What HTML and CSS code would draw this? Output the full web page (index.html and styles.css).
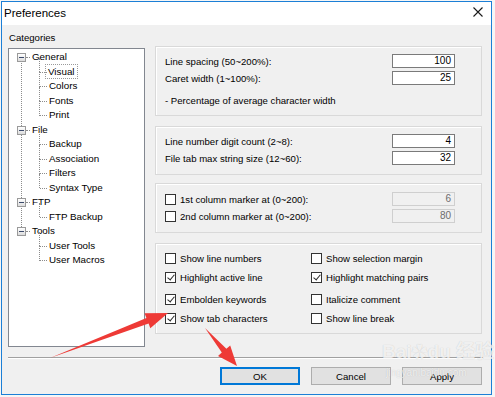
FILE: index.html
```html
<!DOCTYPE html>
<html lang="en">
<head>
    <meta charset="UTF-8">
    <meta name="viewport" content="width=device-width, initial-scale=1.0">
    <title>Preferences</title>
    <link rel="stylesheet" href="styles.css">
</head>
<body>
    <div class="window">
        <div class="titlebar">
            <span class="title">Preferences</span>
            <svg class="close" width="10" height="10" viewBox="0 0 10 10">
                <path d="M0.5 0.5 L9.5 9.5 M9.5 0.5 L0.5 9.5" stroke="#1a1a1a" stroke-width="1.1" fill="none"/>
            </svg>
        </div>
        <div class="content">
            <div class="main">
                <div class="categories">
                    <div class="cat-label">Categories</div>
                    <ul class="tree">
                        <li class="root">
                            <div class="node"><span class="expander"></span>General</div>
                            <ul class="children">
                                <li><span class="focus">Visual</span></li>
                                <li>Colors</li>
                                <li>Fonts</li>
                                <li>Print</li>
                            </ul>
                        </li>
                        <li class="root">
                            <div class="node"><span class="expander"></span>File</div>
                            <ul class="children">
                                <li>Backup</li>
                                <li>Association</li>
                                <li>Filters</li>
                                <li>Syntax Type</li>
                            </ul>
                        </li>
                        <li class="root">
                            <div class="node"><span class="expander"></span>FTP</div>
                            <ul class="children">
                                <li>FTP Backup</li>
                            </ul>
                        </li>
                        <li class="root">
                            <div class="node"><span class="expander"></span>Tools</div>
                            <ul class="children">
                                <li>User Tools</li>
                                <li>User Macros</li>
                            </ul>
                        </li>
                    </ul>
                </div>

                <div class="panels">
                    <div class="group group-caret">
                        <div class="row">
                            <span>Line spacing (50~200%):</span>
                            <div class="field">100</div>
                        </div>
                        <div class="row">
                            <span>Caret width (1~100%):</span>
                            <div class="field">25</div>
                        </div>
                        <div class="note">- Percentage of average character width</div>
                    </div>

                    <div class="group group-digits">
                        <div class="row">
                            <span>Line number digit count (2~8):</span>
                            <div class="field">4</div>
                        </div>
                        <div class="row">
                            <span>File tab max string size (12~60):</span>
                            <div class="field">32</div>
                        </div>
                    </div>

                    <div class="group group-markers">
                        <div class="row">
                            <label class="check"><span class="box"></span>1st column marker at (0~200):</label>
                            <div class="field disabled">6</div>
                        </div>
                        <div class="row">
                            <label class="check"><span class="box"></span>2nd column marker at (0~200):</label>
                            <div class="field disabled">80</div>
                        </div>
                    </div>

                    <div class="group group-options">
                        <div class="check-grid">
                            <label class="check"><span class="box"></span>Show line numbers</label>
                            <label class="check"><span class="box"></span>Show selection margin</label>
                            <label class="check"><span class="box checked"></span>Highlight active line</label>
                            <label class="check"><span class="box checked"></span>Highlight matching pairs</label>
                        </div>
                        <div class="check-grid second">
                            <label class="check"><span class="box checked"></span>Embolden keywords</label>
                            <label class="check"><span class="box"></span>Italicize comment</label>
                            <label class="check"><span class="box checked"></span>Show tab characters</label>
                            <label class="check"><span class="box"></span>Show line break</label>
                        </div>
                    </div>
                </div>
            </div>

            <div class="separator"></div>

            <div class="buttons">
                <button class="btn default">OK</button>
                <button class="btn">Cancel</button>
                <button class="btn">Apply</button>
            </div>
        </div>
    </div>

    <div class="watermark">
        <div class="wm-logo">Bai<span class="paw">&#10047;</span>du 经验</div>
        <div class="wm-url">jingyan.baidu.com</div>
    </div>

    <!-- red annotation arrows drawn over the screenshot -->
    <svg class="arrows" width="495" height="397" viewBox="0 0 495 397">
        <polygon points="50,358 146.4,318 144.6,313.3 168,313 150.3,328.3 148.6,323.6" fill="#ee3a36"/>
        <polygon points="205,328 226.4,348.8 230.2,345.5 237,366 218,355.9 221.8,352.6" fill="#ee3a36"/>
    </svg>
</body>
</html>
```

FILE: styles.css
```css
body {
    margin: 0;
    width: 495px;
    height: 397px;
    position: relative;
    overflow: hidden;
    background-color: #f6f6f6;
    font-family: "Liberation Sans", Arial, sans-serif;
    font-size: 9.6px;
    color: #000;
}

.window {
    box-sizing: border-box;
    width: 491px;
    height: 394px;
    margin: 1px 0 0 1px;
    border: 1px solid #1c7fd6;
    display: flex;
    flex-direction: column;
    background-color: #f0f0f0;
}

.titlebar {
    height: 23px;
    background-color: #fff;
    display: flex;
    align-items: center;
    justify-content: space-between;
    padding: 0 8px 0 2px;
}

.title {
    font-size: 11.5px;
    margin-top: -1px;
}

.close {
    margin-top: -4px;
}

.content {
    flex: 1;
    padding: 0 8px 0 6px;
}

.main {
    display: flex;
    gap: 10px;
}

/* left column: category tree */
.categories {
    width: 137px;
    padding-top: 7px;
}

.cat-label {
    line-height: 12px;
    margin: 0 0 4px 1px;
}

.tree {
    box-sizing: border-box;
    height: 299px;
    margin: 0;
    padding: 1px 0 0 0;
    list-style: none;
    background-color: #fff;
    border: 1px solid #828790;
    font-size: 9.8px;
}

.tree ul {
    list-style: none;
    margin: 0;
    padding: 0;
}

.root {
    position: relative;
}

.root:not(:last-child)::before {
    content: "";
    position: absolute;
    left: 12px;
    top: 7px;
    height: 100%;
    border-left: 1px dotted #8c8c8c;
}

.node {
    position: relative;
    height: 14.5px;
    line-height: 14.5px;
    padding-left: 23px;
}

.node::after {
    content: "";
    position: absolute;
    left: 17px;
    top: 7px;
    width: 4px;
    border-top: 1px dotted #8c8c8c;
}

.expander {
    position: absolute;
    left: 8px;
    top: 3px;
    box-sizing: border-box;
    width: 9px;
    height: 9px;
    border: 1px solid #9a9a9a;
    background: linear-gradient(#fff, #dcdcdc);
    z-index: 1;
}

.expander::before {
    content: "";
    position: absolute;
    left: 1px;
    top: 3px;
    width: 5px;
    height: 1px;
    background-color: #3b4a6b;
}

.children li {
    position: relative;
    height: 14.5px;
    line-height: 14.5px;
    padding-left: 40px;
}

.children li::before {
    content: "";
    position: absolute;
    left: 31px;
    top: 7px;
    width: 7px;
    border-top: 1px dotted #8c8c8c;
}

.children li::after {
    content: "";
    position: absolute;
    left: 30px;
    top: -7px;
    height: 14.5px;
    border-left: 1px dotted #8c8c8c;
}

.focus {
    display: inline-block;
    line-height: 13px;
    padding: 0 2px;
    margin-left: -3px;
    outline: 1px dotted #9a9a9a;
}

/* right column: option groups */
.panels {
    width: 327px;
    padding-top: 21px;
}

.group {
    box-sizing: border-box;
    border: 1px solid #d9d9d9;
    box-shadow: inset 1px 1px 0 #fff;
    padding: 7px 26px 8px 9px;
}

.group-caret {
    height: 70px;
}

.group-digits {
    height: 49px;
    margin-top: 10px;
}

.group-markers {
    height: 50px;
    margin-top: 8px;
    padding-top: 8px;
}

.group-options {
    height: 91px;
    margin-top: 10px;
    padding: 5px 0 0 9px;
}

.row {
    display: flex;
    align-items: center;
    justify-content: space-between;
    height: 14px;
}

.row + .row {
    margin-top: 3px;
}

.note {
    line-height: 12px;
    margin-top: 10px;
}

.field {
    box-sizing: border-box;
    width: 63px;
    height: 14px;
    border: 1px solid #7a7a7a;
    background-color: #fff;
    text-align: right;
    padding-right: 3px;
    font-size: 10px;
    line-height: 12px;
}

.field.disabled {
    background-color: #f0f0f0;
    border-color: #cfcfcf;
    color: #6d6d6d;
}

.check {
    display: flex;
    align-items: center;
}

.box {
    box-sizing: border-box;
    width: 11px;
    height: 11px;
    margin-right: 4px;
    border: 1px solid #333;
    background-color: #fff;
    position: relative;
}

.box.checked::after {
    content: "";
    position: absolute;
    left: 3px;
    top: 0px;
    width: 3px;
    height: 6px;
    border: solid #2b2b2b;
    border-width: 0 1px 1px 0;
    transform: rotate(40deg);
}

.check-grid {
    display: grid;
    grid-template-columns: 146px 1fr;
    grid-auto-rows: 18px;
    row-gap: 1px;
}

.check-grid.second {
    margin-top: 4px;
}

.separator {
    margin-top: 10px;
    border-top: 1px solid #a0a0a0;
    border-bottom: 1px solid #fff;
}

.buttons {
    display: flex;
    justify-content: flex-end;
    gap: 11px;
    margin: 8px 1px 0 0;
}

.btn {
    box-sizing: border-box;
    width: 80px;
    height: 18px;
    padding: 0;
    border: 1px solid #adadad;
    background-color: #e1e1e1;
    font-family: "Liberation Sans", Arial, sans-serif;
    font-size: 9.6px;
    color: #000;
}

.btn.default {
    border-color: #0078d7;
    box-shadow: inset 0 0 0 1px #0078d7;
}

/* faint site watermark over the bottom right */
.watermark {
    position: absolute;
    left: 382px;
    top: 341px;
    color: rgba(255, 255, 255, 0.75);
    text-shadow: 0 0 1px rgba(0, 0, 0, 0.2);
    pointer-events: none;
}

.wm-logo {
    font-size: 19px;
    font-weight: bold;
    font-family: "Liberation Sans", "Noto Sans CJK SC", sans-serif;
    line-height: 22px;
}

.paw {
    font-size: 16px;
}

.wm-url {
    font-size: 10px;
    margin: 3px 0 0 4px;
}

.arrows {
    position: absolute;
    left: 0;
    top: 0;
    pointer-events: none;
}
```
